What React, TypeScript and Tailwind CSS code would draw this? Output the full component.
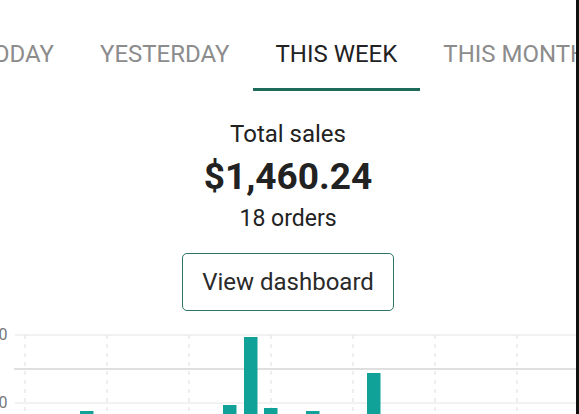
import React from "react";

const tabs = ["TODAY", "YESTERDAY", "THIS WEEK", "THIS MONTH"];
const active = "THIS WEEK";

// bar positions (x, top y) inside the chart svg
const bars: [number, number][] = [
  [80, 86],
  [223, 80],
  [244, 12],
  [264, 83],
  [306, 86],
  [367, 48],
];

const gridX = [25, 107, 189, 271, 353, 435, 517];

function Tabs() {
  return (
    <div className="overflow-hidden">
      <div className="flex ml-[-44px] whitespace-nowrap">
        {tabs.map((t) => (
          <div
            key={t}
            className={`shrink-0 px-[23px] pt-[40px] pb-[20px] border-b-[3px] text-[24px] leading-[28px] ${
              t === active
                ? "border-[#1f6b5b] text-[#222222]"
                : "border-transparent text-[#8c8c8c]"
            }`}
          >
            {t}
          </div>
        ))}
      </div>
    </div>
  );
}

function Chart() {
  return (
    <svg width="576" height="100" className="block mt-[14px]">
      {gridX.map((x) => (
        <line
          key={x}
          x1={x}
          x2={x}
          y1={10}
          y2={100}
          stroke="#dedede"
          strokeWidth={1}
          strokeDasharray="4 5"
        />
      ))}
      <line x1={15} x2={576} y1={10} y2={10} stroke="#e4e4e4" strokeWidth={1} />
      <line x1={14} x2={576} y1={44} y2={44} stroke="#d4d4d4" strokeWidth={1.5} />
      <line x1={15} x2={576} y1={78} y2={78} stroke="#e4e4e4" strokeWidth={1} />
      <text x={7.5} y={15} textAnchor="end" fontSize={16} fill="#777" fontFamily="Roboto">
        0
      </text>
      <text x={7.5} y={83} textAnchor="end" fontSize={16} fill="#777" fontFamily="Roboto">
        0
      </text>
      {bars.map(([x, y]) => (
        <rect key={x} x={x} y={y} width={13.5} height={100 - y} fill="#10a198" />
      ))}
    </svg>
  );
}

export default function App() {
  return (
    <div
      className="flex h-[414px] w-[579px] overflow-hidden bg-white"
      style={{ fontFamily: "Roboto, 'Liberation Sans', sans-serif" }}
    >
      <div className="w-[576px] shrink-0 overflow-hidden">
        <Tabs />
        <div className="flex flex-col items-center text-[#222222]">
          <div className="mt-[27px] text-[24px] leading-[32px]">Total sales</div>
          <div className="mt-[5px] text-[37px] leading-[44px] font-bold">$1,460.24</div>
          <div className="mt-[4px] text-[23px] leading-[32px]">18 orders</div>
          <button
            type="button"
            className="mt-[18px] h-[58px] px-[19px] flex items-center border-[1.5px] border-[#2f7465] rounded-[5px] text-[24px] leading-[28px] text-[#2a2a2a]"
          >
            View dashboard
          </button>
        </div>
        <Chart />
      </div>
      <div className="w-[3px] shrink-0 bg-[#111111]" />
    </div>
  );
}
